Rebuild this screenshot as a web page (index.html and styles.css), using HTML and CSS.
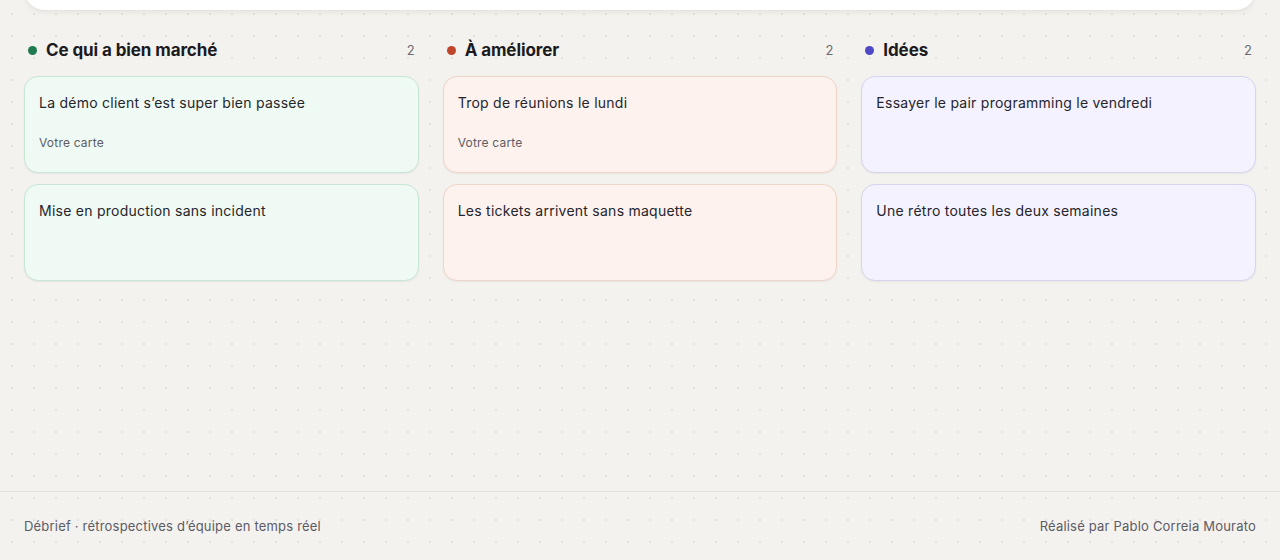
FILE: index.html
```html
<!DOCTYPE html>
<html lang="fr">
<head>
    <meta charset="UTF-8">
    <title>Débrief</title>
    <link rel="stylesheet" href="styles.css">
</head>
<body>
    <main class="page">
        <div class="topbar"></div>

        <div class="board">
            <section class="column good">
                <div class="column-head">
                    <span class="dot"></span>
                    <h2>Ce qui a bien marché</h2>
                    <span class="count">2</span>
                </div>
                <div class="card">
                    <p>La démo client s’est super bien passée</p>
                    <span class="mine">Votre carte</span>
                </div>
                <div class="card">
                    <p>Mise en production sans incident</p>
                </div>
            </section>

            <section class="column bad">
                <div class="column-head">
                    <span class="dot"></span>
                    <h2>À améliorer</h2>
                    <span class="count">2</span>
                </div>
                <div class="card">
                    <p>Trop de réunions le lundi</p>
                    <span class="mine">Votre carte</span>
                </div>
                <div class="card">
                    <p>Les tickets arrivent sans maquette</p>
                </div>
            </section>

            <section class="column ideas">
                <div class="column-head">
                    <span class="dot"></span>
                    <h2>Idées</h2>
                    <span class="count">2</span>
                </div>
                <div class="card">
                    <p>Essayer le pair programming le vendredi</p>
                </div>
                <div class="card">
                    <p>Une rétro toutes les deux semaines</p>
                </div>
            </section>
        </div>
    </main>

    <footer class="footer">
        <span>Débrief · rétrospectives d’équipe en temps réel</span>
        <span>Réalisé par Pablo Correia Mourato</span>
    </footer>
</body>
</html>
```

FILE: styles.css
```css
html, body {
    height: 100%;
}
body {
    font-family: Inter, "Noto Sans", sans-serif;
    margin: 0;
    display: flex;
    flex-direction: column;
    overflow: hidden;
    color: #24232b;
    background-color: #f4f2ee;
    background-image: radial-gradient(circle, rgba(0, 0, 0, 0.07) 1px, transparent 1.3px);
    background-size: 22px 22px;
    background-position: 1px 3px;
}
.page {
    flex: 1;
    padding: 0 24px;
}
.topbar {
    height: 71px;
    margin-top: -60px;
    background-color: #fff;
    border-radius: 20px;
    border: 1px solid #e6e3dd;
    box-shadow: 0 2px 4px rgba(0, 0, 0, 0.05);
    box-sizing: border-box;
}
.board {
    display: grid;
    grid-template-columns: repeat(3, 1fr);
    gap: 24px;
    padding-top: 28px;
}
.column {
    display: flex;
    flex-direction: column;
    gap: 11px;
}
.column-head {
    display: flex;
    align-items: center;
    gap: 9px;
    height: 22px;
    padding: 0 4px 0 4px;
    margin-bottom: 4px;
}
.column-head h2 {
    flex: 1;
    margin: 0;
    font-size: 17px;
    font-weight: 700;
    letter-spacing: -0.1px;
    color: #1b1a21;
}
.dot {
    width: 9px;
    height: 9px;
    border-radius: 50%;
}
.count {
    font-size: 13px;
    color: #6b6a72;
}
.card {
    min-height: 97px;
    box-sizing: border-box;
    padding: 17px 14px 21px;
    border-radius: 14px;
    border: 1px solid;
    box-shadow: 0 1px 2px rgba(0, 0, 0, 0.05);
    display: flex;
    flex-direction: column;
}
.card p {
    margin: 0;
    font-size: 14px;
    line-height: 18px;
    letter-spacing: 0.25px;
    color: #26252d;
}
.mine {
    margin-top: auto;
    font-size: 12px;
    color: #5e5d67;
    line-height: 16px;
    letter-spacing: 0.2px;
}
.good .dot { background-color: #1f7a4f; }
.good .card {
    background-color: #eefaf3;
    border-color: #c7e6d4;
}
.bad .dot { background-color: #c0452b; }
.bad .card {
    background-color: #fdf2ed;
    border-color: #efd4c8;
}
.ideas .dot { background-color: #4e47c6; }
.ideas .card {
    background-color: #f3f2fe;
    border-color: #d6d4ef;
}
.footer {
    height: 69px;
    box-sizing: border-box;
    border-top: 1px solid #e3e0da;
    padding: 0 24px;
    display: flex;
    align-items: center;
    justify-content: space-between;
    font-size: 13px;
    letter-spacing: 0.2px;
    color: #5c5b66;
}
```
